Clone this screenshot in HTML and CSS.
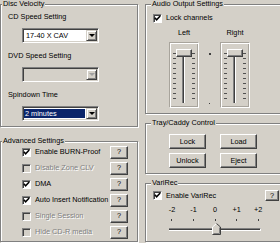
FILE: index.html
```html
<!DOCTYPE html>
<html lang="en">
<head>
    <meta charset="UTF-8">
    <title>Drive Settings</title>
    <link rel="stylesheet" href="styles.css">
</head>
<body>
    <div class="dialog">
        <div class="col col-left">
            <div class="group velocity">
                <span class="legend">Disc Velocity</span>
                <div class="field-label">CD Speed Setting</div>
                <div class="combo">
                    <span class="combo-text">17-40 X CAV</span>
                    <span class="combo-btn"><i class="arrow"></i></span>
                </div>
                <div class="field-label">DVD Speed Setting</div>
                <div class="combo disabled">
                    <span class="combo-text"></span>
                    <span class="combo-btn"><i class="arrow"></i></span>
                </div>
                <div class="field-label">Spindown Time</div>
                <div class="combo">
                    <span class="combo-text selected">2 minutes</span>
                    <span class="combo-btn"><i class="arrow"></i></span>
                </div>
            </div>

            <div class="group advanced">
                <span class="legend">Advanced Settings</span>
                <div class="check-row">
                    <span class="check"><svg viewBox="0 0 7 7"><polyline points="0.8,2.8 2.6,4.8 6.2,0.9"/></svg></span>
                    <span class="check-label">Enable BURN-Proof</span>
                    <button class="btn help">?</button>
                </div>
                <div class="check-row disabled">
                    <span class="check"></span>
                    <span class="check-label">Disable Zone CLV</span>
                    <button class="btn help">?</button>
                </div>
                <div class="check-row">
                    <span class="check"><svg viewBox="0 0 7 7"><polyline points="0.8,2.8 2.6,4.8 6.2,0.9"/></svg></span>
                    <span class="check-label">DMA</span>
                    <button class="btn help">?</button>
                </div>
                <div class="check-row">
                    <span class="check"><svg viewBox="0 0 7 7"><polyline points="0.8,2.8 2.6,4.8 6.2,0.9"/></svg></span>
                    <span class="check-label">Auto Insert Notification</span>
                    <button class="btn help">?</button>
                </div>
                <div class="check-row disabled">
                    <span class="check"></span>
                    <span class="check-label">Single Session</span>
                    <button class="btn help">?</button>
                </div>
                <div class="check-row disabled">
                    <span class="check"></span>
                    <span class="check-label">Hide CD-R media</span>
                    <button class="btn help">?</button>
                </div>
            </div>
        </div>

        <div class="col col-right">
            <div class="group audio">
                <span class="legend">Audio Output Settings</span>
                <div class="lock-row">
                    <span class="check"><svg viewBox="0 0 7 7"><polyline points="0.8,2.8 2.6,4.8 6.2,0.9"/></svg></span>
                    <span class="check-label">Lock channels</span>
                </div>
                <div class="channels">
                    <div class="channel">
                        <div class="channel-name">Left</div>
                        <div class="slider-box"><span class="v-thumb"></span></div>
                    </div>
                    <div class="divider">
                        <span class="dot"></span>
                        <span class="dot small"></span>
                    </div>
                    <div class="channel">
                        <div class="channel-name">Right</div>
                        <div class="slider-box"><span class="v-thumb"></span></div>
                    </div>
                </div>
            </div>

            <div class="group tray">
                <span class="legend">Tray/Caddy Control</span>
                <div class="tray-buttons">
                    <button class="btn">Lock</button>
                    <button class="btn">Load</button>
                    <button class="btn">Unlock</button>
                    <button class="btn">Eject</button>
                </div>
            </div>

            <div class="group varirec">
                <span class="legend">VariRec</span>
                <div class="vari-row">
                    <span class="check"><svg viewBox="0 0 7 7"><polyline points="0.8,2.8 2.6,4.8 6.2,0.9"/></svg></span>
                    <span class="check-label">Enable VariRec</span>
                    <button class="btn help small">?</button>
                </div>
                <div class="scale">
                    <div class="scale-labels">
                        <span>-2</span><span>-1</span><span>0</span><span>+1</span><span>+2</span>
                    </div>
                    <div class="scale-ticks">
                        <span></span><span></span><span></span><span></span><span></span>
                    </div>
                    <div class="scale-track"></div>
                    <svg class="h-thumb" viewBox="0 0 9 12">
                        <polygon points="0.5,11.5 0.5,4 4.5,0.5 8.5,4 8.5,11.5" fill="#d4d0c8"/>
                        <polyline points="0.5,11 0.5,4 4.5,0.5" fill="none" stroke="#fff"/>
                        <polyline points="4.5,0.5 8.5,4 8.5,11.5 0.5,11.5" fill="none" stroke="#404040"/>
                        <polyline points="7.5,4.5 7.5,10.5 1.5,10.5" fill="none" stroke="#808080"/>
                    </svg>
                </div>
            </div>
        </div>
    </div>
</body>
</html>
```

FILE: styles.css
```css
body {
    margin: 0;
    width: 280px;
    height: 243px;
    overflow: hidden;
    background-color: #d4d0c8;
    color: #000;
    font-family: "Liberation Sans", Arial, sans-serif;
    font-size: 7.3px;
    line-height: 10px;
}

.dialog {
    display: flex;
    gap: 7px;
    width: 290px;
}

.col {
    flex: none;
    display: flex;
    flex-direction: column;
}

.col-left {
    width: 138px;
}

.col-right {
    width: 136px;
}

/* etched group box */
.group {
    position: relative;
    box-sizing: border-box;
    border: 1px solid #808080;
    box-shadow: 1px 1px 0 #fff, inset 1px 1px 0 #fff;
}

.group .legend {
    position: absolute;
    top: -6px;
    left: 1px;
    padding: 0 1px;
    background-color: #d4d0c8;
    white-space: nowrap;
}

.col-right .group .legend {
    left: 5px;
}

/* shared controls */
.btn {
    box-sizing: border-box;
    margin: 0;
    padding: 0;
    font: inherit;
    color: #000;
    background-color: #d4d0c8;
    border: 1px solid;
    border-color: #fff #404040 #404040 #fff;
    box-shadow: inset -1px -1px 0 #808080;
}

.check {
    flex: none;
    box-sizing: border-box;
    width: 9px;
    height: 9px;
    border: 1px solid;
    border-color: #808080 #fff #fff #808080;
    box-shadow: inset 1px 1px 0 #404040;
    background-color: #fff;
    display: flex;
}

.check svg {
    width: 7px;
    height: 7px;
}

.check polyline {
    fill: none;
    stroke: #000;
    stroke-width: 1.5;
}

.check-label {
    margin-left: 4px;
    white-space: nowrap;
}

.disabled .check {
    background-color: #d4d0c8;
}

.disabled .check-label {
    color: #808080;
    text-shadow: 1px 1px 0 #fff;
}

/* Disc Velocity */
.velocity {
    margin-top: 4px;
    height: 123px;
    padding: 6px 0 0 7px;
}

.field-label {
    height: 11px;
    line-height: 11px;
}

.combo {
    box-sizing: border-box;
    display: flex;
    width: 77px;
    height: 15px;
    margin: 6px 0 7px 14px;
    padding: 1px;
    border: 1px solid;
    border-color: #808080 #fff #fff #808080;
    box-shadow: inset 1px 1px 0 #404040, inset -1px -1px 0 #d4d0c8;
    background-color: #fff;
}

.combo-text {
    flex: 1;
    margin: 1px 0 0 1px;
    padding-left: 1px;
    line-height: 10px;
    white-space: nowrap;
}

.combo-text.selected {
    margin: 1px 1px 1px 0;
    background-color: #0a246a;
    color: #fff;
}

.combo-btn {
    box-sizing: border-box;
    width: 11px;
    height: 11px;
    border: 1px solid;
    border-color: #d4d0c8 #404040 #404040 #d4d0c8;
    box-shadow: inset 1px 1px 0 #fff, inset -1px -1px 0 #808080;
    background-color: #d4d0c8;
    display: flex;
    align-items: center;
    justify-content: center;
}

.arrow {
    width: 0;
    height: 0;
    border-left: 3px solid transparent;
    border-right: 3px solid transparent;
    border-top: 3px solid #000;
}

.combo.disabled {
    background-color: #d4d0c8;
}

.combo.disabled .arrow {
    border-top-color: #a0a0a0;
}

/* Advanced Settings */
.advanced {
    margin-top: 14px;
    height: 101px;
    padding: 2px 9px 0 21px;
}

.check-row {
    display: flex;
    align-items: center;
    height: 16px;
}

.check-row .check-label {
    flex: 1;
}

.help {
    width: 18px;
    height: 13px;
    line-height: 10px;
}

.help.small {
    width: 14px;
    height: 11px;
    line-height: 9px;
    margin-left: auto;
}

/* Audio Output Settings */
.audio {
    margin-top: 4px;
    height: 110px;
    padding-top: 8px;
}

.lock-row {
    display: flex;
    align-items: center;
    height: 10px;
    padding-left: 7px;
}

.channels {
    display: flex;
    margin-top: 5px;
    padding-left: 23px;
}

.channel {
    width: 30px;
    display: flex;
    flex-direction: column;
    align-items: center;
}

.channel-name {
    height: 10px;
}

.slider-box {
    position: relative;
    box-sizing: border-box;
    width: 30px;
    height: 66px;
    margin-top: 4px;
    border: 1px solid;
    border-color: #a8a49c #fff #fff #a8a49c;
    box-shadow: inset 1px 1px 0 #fff, inset -1px -1px 0 #a8a49c;
    background:
        repeating-linear-gradient(to bottom, #505050 0 1px, transparent 1px 5px) 3px 10px / 3px 46px no-repeat,
        repeating-linear-gradient(to bottom, #505050 0 1px, transparent 1px 5px) 22px 10px / 3px 46px no-repeat,
        linear-gradient(to right, #808080 0 1px, #404040 1px 2px, #fff 2px 3px) 12px 7px / 3px 53px no-repeat;
}

.v-thumb {
    position: absolute;
    left: 6px;
    top: 6px;
    box-sizing: border-box;
    width: 16px;
    height: 8px;
    border: 1px solid;
    border-color: #fff #404040 #404040 #fff;
    box-shadow: inset -1px -1px 0 #808080;
    background-color: #d4d0c8;
}

.divider {
    width: 21px;
    display: flex;
    flex-direction: column;
    align-items: center;
    padding-top: 25px;
}

.dot {
    width: 2px;
    height: 2px;
    background-color: #404040;
}

.dot.small {
    width: 1px;
    height: 1px;
    margin-top: 48px;
}

/* Tray/Caddy Control */
.tray {
    margin-top: 9px;
    height: 51px;
    padding: 10px 0 0 23px;
}

.tray-buttons {
    display: grid;
    grid-template-columns: 37px 37px;
    grid-auto-rows: 15px;
    gap: 4px 14px;
}

/* VariRec */
.varirec {
    margin-top: 9px;
    height: 59px;
    padding-top: 6px;
}

.vari-row {
    display: flex;
    align-items: center;
    height: 11px;
    padding: 0 1px 0 7px;
}

.scale {
    position: relative;
    width: 94px;
    margin: 4px 0 0 22px;
}

.scale-labels,
.scale-ticks {
    display: flex;
    justify-content: space-between;
}

.scale-labels span {
    width: 8px;
    text-align: center;
}

.scale-ticks {
    margin-top: 4px;
    padding: 0 3px;
}

.scale-ticks span {
    width: 1px;
    height: 2px;
    background-color: #404040;
}

.scale-track {
    box-sizing: border-box;
    width: 92px;
    height: 3px;
    margin: 7px 0 0 1px;
    border-top: 1px solid #808080;
    border-bottom: 1px solid #fff;
    border-right: 1px solid #fff;
    background-color: #404040;
}

.h-thumb {
    position: absolute;
    left: 44px;
    top: 18px;
    width: 9px;
    height: 12px;
}
```
